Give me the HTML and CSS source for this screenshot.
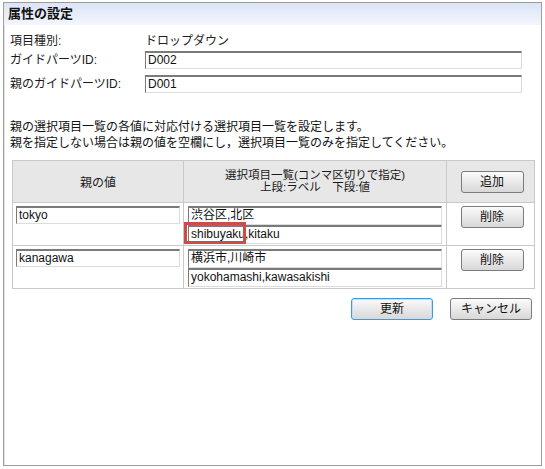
FILE: index.html
```html
<!DOCTYPE html>
<html lang="ja">
<head>
<meta charset="utf-8">
<link rel="stylesheet" href="styles.css">
</head>
<body>
<div class="frame">
  <div class="title">属性の設定</div>
  <div class="form">
    <div class="row r1"><span class="label">項目種別:</span><span class="value">ドロップダウン</span></div>
    <div class="row r2"><span class="label">ガイドパーツID:</span><span class="input wide">D002</span></div>
    <div class="row r3"><span class="label">親のガイドパーツID:</span><span class="input wide">D001</span></div>
  </div>
  <div class="desc">
    <div>親の選択項目一覧の各値に対応付ける選択項目一覧を設定します。</div>
    <div>親を指定しない場合は親の値を空欄にし，選択項目一覧のみを指定してください。</div>
  </div>
  <table class="grid">
    <tr class="head">
      <th class="c1">親の値</th>
      <th class="c2"><div class="h2a">選択項目一覧(コンマ区切りで指定)</div><div class="h2b">上段:ラベル　下段:値</div></th>
      <th class="c3"><span class="btn">追加</span></th>
    </tr>
    <tr class="body">
      <td class="c1"><span class="input parent">tokyo</span></td>
      <td class="c2"><span class="input item">渋谷区,北区</span><span class="input item second">shibuyaku,kitaku<span class="mark"></span></span></td>
      <td class="c3"><span class="btn">削除</span></td>
    </tr>
    <tr class="body">
      <td class="c1"><span class="input parent">kanagawa</span></td>
      <td class="c2"><span class="input item">横浜市,川崎市</span><span class="input item second">yokohamashi,kawasakishi</span></td>
      <td class="c3"><span class="btn">削除</span></td>
    </tr>
  </table>
  <div class="actions">
    <span class="btn big focus">更新</span>
    <span class="btn big">キャンセル</span>
  </div>
</div>
</body>
</html>
```
FILE: styles.css
```css
html, body {
  margin: 0;
  padding: 0;
  background: #ffffff;
}
body {
  font-family: "Liberation Sans", "Noto Sans CJK JP", sans-serif;
  font-size: 12px;
  color: #1a1a1a;
}
.frame {
  margin: 2px 0 0 3px;
  width: 539px;
  height: 464px;
  box-sizing: border-box;
  border: 1px solid #9d9d9d;
  box-shadow: inset 1px 1px 0 #e2e2e2;
  position: relative;
}
.title {
  height: 22px;
  line-height: 22px;
  padding-left: 4px;
  font-weight: bold;
  font-size: 13px;
  color: #111;
  background: linear-gradient(to bottom, #dbe4f7, #f3f6fc);
}
.form {
  padding: 7px 0 0 6px;
}
.row {
  display: flex;
  align-items: center;
  height: 18px;
  line-height: 16px;
}
.r2 { margin-top: 1px; }
.r3 { margin-top: 6px; }
.label {
  width: 135px;
  flex: none;
}
.value {
  color: #222;
}
.input {
  display: block;
  box-sizing: border-box;
  height: 18px;
  line-height: 15px;
  padding-left: 2px;
  background: #fff;
  border-top: 2px solid #7a7a7a;
  border-left: 1px solid #7a7a7a;
  border-right: 1px solid #dcdcdc;
  border-bottom: 1px solid #dcdcdc;
  font-size: 12px;
  color: #111;
  position: relative;
}
.wide {
  width: 377px;
}
.desc {
  margin-top: 26px;
  padding-left: 6px;
  line-height: 16px;
  color: #111;
}
.grid {
  margin: 9px 0 0 8px;
  width: 519px;
  border-collapse: collapse;
  table-layout: fixed;
}
.grid td, .grid th {
  border: 1px solid #c9c9c9;
  padding: 0;
  vertical-align: top;
}
.head th {
  background: #e7e7e7;
  height: 41px;
  font-weight: normal;
  vertical-align: middle;
  text-align: center;
}
.c1 { width: 170px; }
.c2 { width: 262px; }
.c3 { width: 87px; }
.h2a, .h2b { line-height: 12px; font-size: 11.5px; }
.h2a { margin-top: -1px; }
.body td {
  height: 39px;
}
.body .c1 {
  padding: 3px 0 0 3px;
}
.parent {
  width: 164px;
}
.body .c2 {
  padding: 3px 0 0 4px;
}
.item {
  width: 254px;
  height: 19px;
}
.body .c3 {
  padding-top: 3px;
  text-align: center;
}
.btn {
  display: inline-block;
  box-sizing: border-box;
  width: 63px;
  height: 22px;
  line-height: 20px;
  text-align: center;
  border: 1px solid #7b7b7b;
  border-radius: 3px;
  background: linear-gradient(to bottom, #fbfbfb, #e9e9e9 50%, #d8d8d8);
  color: #111;
}
.head .btn,
.body .btn {
  margin-left: 3px;
}
.actions {
  display: flex;
  justify-content: flex-end;
  gap: 17px;
  margin-top: 9px;
  padding-right: 9px;
}
.btn.big {
  width: 82px;
}
.btn.focus {
  border-color: #3f9ad8;
  box-shadow: inset 0 0 0 1px #bfe0f6;
}
.mark {
  position: absolute;
  left: -5px;
  top: -5px;
  width: 62px;
  height: 22px;
  border: 3px solid #cc4b4b;
  box-sizing: border-box;
}
```
